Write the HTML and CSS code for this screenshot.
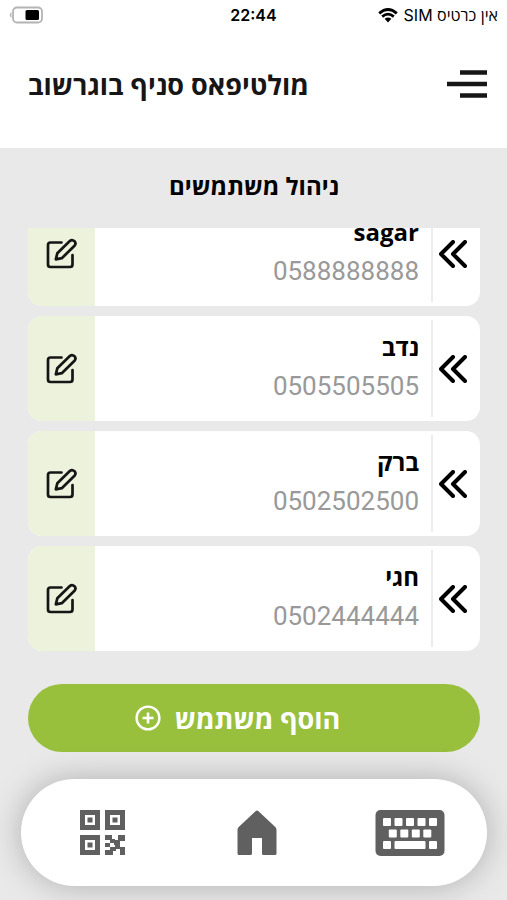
FILE: index.html
```html
<!DOCTYPE html>
<html lang="he" dir="rtl">
<head>
    <meta charset="UTF-8">
    <meta name="viewport" content="width=device-width, initial-scale=1.0">
    <title>ניהול משתמשים</title>
    <link rel="stylesheet" href="styles.css">
</head>
<body>
    <svg class="sprite" aria-hidden="true">
        <symbol id="arrows" viewBox="0 0 28 28">
            <path d="M14 2 L2 14 L14 26 M26 2 L14 14 L26 26" fill="none" stroke="currentColor" stroke-width="4" stroke-linecap="round" stroke-linejoin="round"/>
        </symbol>
        <symbol id="edit" viewBox="0 0 32 32">
            <path d="M15.5 4.5 H4.5 Q2 4.5 2 7 V26.5 Q2 29 4.5 29 H24 Q26.500 29 26.500 26.5 V17" fill="none" stroke="currentColor" stroke-width="2.7" stroke-linecap="round"/>
            <path d="M9.8 21.3 L11.300 15.3 L23.800 3 Q26.100 1 28.500 3.2 Q30.500 5.6 28.500 7.8 L15.800 20.2 Z" fill="none" stroke="currentColor" stroke-width="2.7" stroke-linejoin="round"/>
        </symbol>
    </svg>
    <div class="page">
        <div class="status">
            <div class="sim">
                <span>אין כרטיס SIM</span>
                <svg width="20" height="15" viewBox="0 0 20 15">
                    <path d="M1.2 5.4 Q10 -2.4 18.8 5.4 M4.2 8.6 Q10 3.6 15.8 8.6" fill="none" stroke="#000" stroke-width="2.8"/>
                    <path d="M6.6 10.8 Q10 8 13.4 10.8 L10 14.4 Z" fill="#000"/>
                </svg>
            </div>
            <span class="hora">22:44</span>
            <div class="battery">
                <svg width="34" height="18" viewBox="0 0 34 18">
                    <rect x="4" y="1.5" width="29" height="15" rx="4" fill="#fff" stroke="#b4b4b4" stroke-width="1.8"/>
                    <path d="M2.4 6 Q-1 9 2.4 12 Z" fill="#b4b4b4"/>
                    <rect x="16.5" y="4" width="13.5" height="10" rx="1.5" fill="#000"/>
                </svg>
            </div>
        </div>
        <header class="header">
            <button class="menu" aria-label="תפריט">
                <svg width="42" height="28" viewBox="0 0 42 28">
                    <path d="M14 2.5 H41 M1 14 H41 M14 25.5 H41" stroke="#161616" stroke-width="4.4"/>
                </svg>
            </button>
            <h1>מולטיפאס סניף בוגרשוב</h1>
        </header>
        <main class="main">
            <h2>ניהול משתמשים</h2>
            <ul class="list">
                <li class="card">
                    <button class="open" aria-label="פתח"><svg width="28" height="28"><use href="#arrows"/></svg></button>
                    <div class="user">
                        <h3>sagar</h3>
                        <p>0588888888</p>
                    </div>
                    <button class="edit" aria-label="ערוך"><svg width="32" height="32"><use href="#edit"/></svg></button>
                </li>
                <li class="card">
                    <button class="open" aria-label="פתח"><svg width="28" height="28"><use href="#arrows"/></svg></button>
                    <div class="user">
                        <h3>נדב</h3>
                        <p>0505505505</p>
                    </div>
                    <button class="edit" aria-label="ערוך"><svg width="32" height="32"><use href="#edit"/></svg></button>
                </li>
                <li class="card">
                    <button class="open" aria-label="פתח"><svg width="28" height="28"><use href="#arrows"/></svg></button>
                    <div class="user">
                        <h3>ברק</h3>
                        <p>0502502500</p>
                    </div>
                    <button class="edit" aria-label="ערוך"><svg width="32" height="32"><use href="#edit"/></svg></button>
                </li>
                <li class="card">
                    <button class="open" aria-label="פתח"><svg width="28" height="28"><use href="#arrows"/></svg></button>
                    <div class="user">
                        <h3>חגי</h3>
                        <p>0502444444</p>
                    </div>
                    <button class="edit" aria-label="ערוך"><svg width="32" height="32"><use href="#edit"/></svg></button>
                </li>
            </ul>
            <button class="add">
                <span>הוסף משתמש</span>
                <svg width="26" height="26" viewBox="0 0 26 26">
                    <circle cx="13" cy="13" r="11.4" fill="none" stroke="#fff" stroke-width="2.4"/>
                    <path d="M13 7.5 V18.5 M7.5 13 H18.5" stroke="#fff" stroke-width="2.6"/>
                </svg>
            </button>
        </main>
        <nav class="nav">
            <a href="#keyboard" aria-label="מקלדת">
                <svg width="70" height="46" viewBox="0 0 70 46">
                    <rect x="0.5" width="69" height="46" rx="5" fill="#606060"/>
                    <g fill="#fff">
                        <rect x="8" y="8" width="8" height="8" rx="1"/>
                        <rect x="19.5" y="8" width="8" height="8" rx="1"/>
                        <rect x="31" y="8" width="8" height="8" rx="1"/>
                        <rect x="42.5" y="8" width="8" height="8" rx="1"/>
                        <rect x="54" y="8" width="8" height="8" rx="1"/>
                        <rect x="13.8" y="19.5" width="8" height="8" rx="1"/>
                        <rect x="25.3" y="19.5" width="8" height="8" rx="1"/>
                        <rect x="36.8" y="19.5" width="8" height="8" rx="1"/>
                        <rect x="48.3" y="19.5" width="8" height="8" rx="1"/>
                        <rect x="8" y="31" width="8" height="8" rx="1"/>
                        <rect x="19.5" y="31" width="31" height="8" rx="1"/>
                        <rect x="54" y="31" width="8" height="8" rx="1"/>
                    </g>
                </svg>
            </a>
            <a href="#home" aria-label="בית">
                <svg width="40" height="46" viewBox="0 0 40 46">
                    <path d="M18.5 1.2 Q20 0 21.5 1.2 L38.3 17 Q39.5 18.2 39.5 20 V43.5 Q39.5 45 38 45 H26.5 Q25 45 25 43.5 V28 H15 V43.5 Q15 45 13.5 45 H2 Q0.5 45 0.5 43.5 V20 Q0.5 18.2 1.7 17 Z" fill="#606060"/>
                </svg>
            </a>
            <a href="#qr" aria-label="קוד QR">
                <svg width="45" height="45" viewBox="0 0 45 45">
                    <g fill="none" stroke="#606060" stroke-width="5">
                        <rect x="2.5" y="2.5" width="15" height="15"/>
                        <rect x="27.5" y="2.5" width="15" height="15"/>
                        <rect x="2.5" y="27.5" width="15" height="15"/>
                    </g>
                    <path d="M7.5 7.5h5v5h-5z M32.5 7.5h5v5h-5z M7.5 32.5h5v5h-5z" fill="#606060"/>
                    <path d="M25 25h7v5h-7z M38 25h7v6h-7z M30 29h5v4h-5z M34 30h6v5h-6z M25 33h5v4h-5z M35 35h5v4h-5z M30 37h6v4h-6z M25 40h8v5h-8z M40 37h5v8h-5z" fill="#606060"/>
                </svg>
            </a>
        </nav>
    </div>
</body>
</html>
```
FILE: styles.css
```css
*{
    margin: 0;
    padding: 0;
    box-sizing: border-box;
}
body {
    background-color: #e9e9e9;
    font-family: "Open Sans", "Noto Sans", sans-serif;
    color: #000;
}
button {
    border: none;
    background: none;
    font-family: inherit;
    color: inherit;
    cursor: pointer;
}
svg {
    display: block;
}
.sprite {
    display: none;
}
.page {
    display: flex;
    flex-direction: column;
    height: 100vh;
}
.status {
    display: grid;
    grid-template-columns: 1fr auto 1fr;
    align-items: center;
    height: 30px;
    padding: 0 9px;
    background-color: #fff;
    font-family: Inter, "Open Sans", sans-serif;
    font-size: 16px;
}
.sim {
    display: flex;
    align-items: center;
    gap: 6px;
}
.hora {
    font-weight: 600;
}
.battery {
    justify-self: end;
}
.header {
    display: flex;
    justify-content: space-between;
    align-items: center;
    height: 118px;
    padding: 0 19px 10px 28px;
    background-color: #fff;
}
h1 {
    font-size: 27px;
    color: #161616;
}
.main {
    flex: 1;
    min-height: 0;
    display: flex;
    flex-direction: column;
    padding: 0 27px 0 28px;
}
h2 {
    height: 80px;
    line-height: 76px;
    font-size: 24px;
    text-align: center;
}
.list {
    flex: 1;
    min-height: 0;
    display: flex;
    flex-direction: column;
    justify-content: flex-end;
    gap: 10px;
    overflow: hidden;
    list-style: none;
}
.card {
    flex-shrink: 0;
    display: flex;
    height: 105px;
    background-color: #fff;
    border-radius: 14px;
    overflow: hidden;
}
.open {
    display: flex;
    justify-content: center;
    align-items: center;
    width: 49px;
    margin: 4px 0;
    padding-right: 8px;
    border-left: 2px solid #ececec;
}
.user {
    flex: 1;
    padding: 14px 12px;
}
h3 {
    font-size: 24px;
    line-height: 34px;
}
.user p {
    font-family: Roboto, sans-serif;
    font-size: 26px;
    line-height: 44px;
    color: #999;
}
.edit {
    display: flex;
    justify-content: center;
    align-items: center;
    width: 67px;
    background-color: #edf2dc;
    color: #161616;
}
.add {
    display: flex;
    justify-content: center;
    align-items: center;
    gap: 14px;
    height: 68px;
    margin: 33px 0 27px;
    padding-right: 33px;
    border-radius: 34px;
    background-color: #98c03d;
    color: #fff;
    font-size: 27px;
    font-weight: bold;
}
.nav {
    display: grid;
    grid-template-columns: 1fr 1fr 1fr;
    align-items: center;
    justify-items: center;
    height: 107px;
    margin: 0 20px 14px 21px;
    padding-left: 5px;
    border-radius: 54px;
    background-color: #fff;
    box-shadow: 0 0 32px rgba(0, 0, 0, 0.25);
}
```
